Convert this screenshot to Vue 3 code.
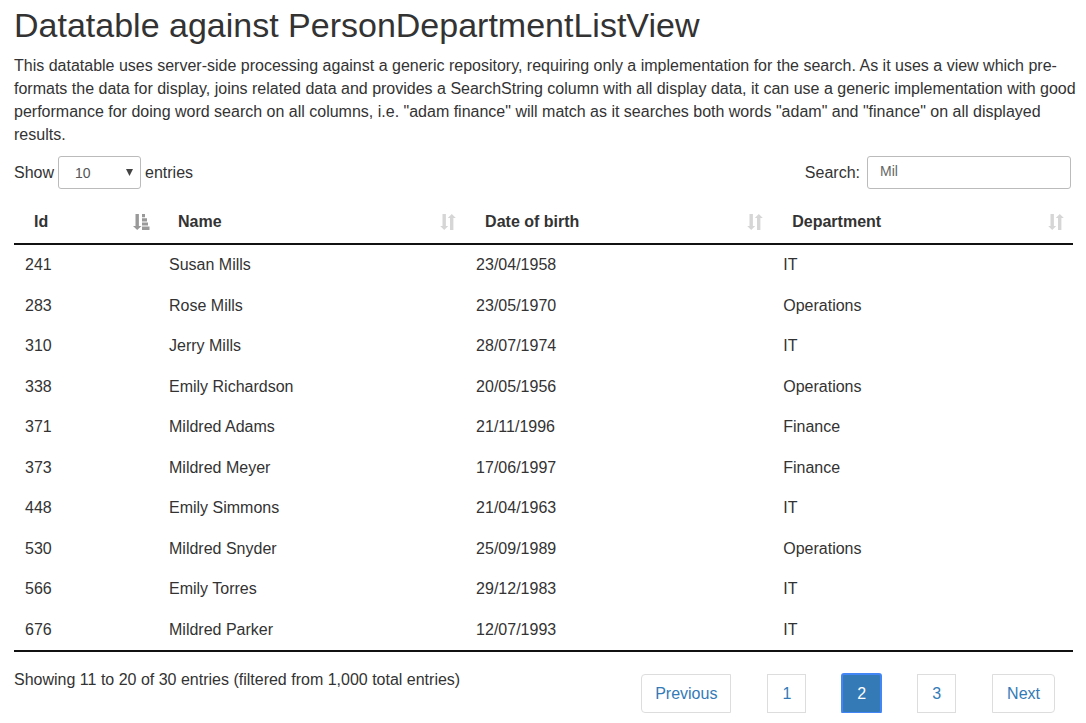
<script setup>
import { ref } from 'vue'

const pageLength = ref('10')
const search = ref('Mil')
const columns = [
  { label: 'Id', sorted: true },
  { label: 'Name' },
  { label: 'Date of birth' },
  { label: 'Department' }
]
const rows = [
  [241, 'Susan Mills', '23/04/1958', 'IT'],
  [283, 'Rose Mills', '23/05/1970', 'Operations'],
  [310, 'Jerry Mills', '28/07/1974', 'IT'],
  [338, 'Emily Richardson', '20/05/1956', 'Operations'],
  [371, 'Mildred Adams', '21/11/1996', 'Finance'],
  [373, 'Mildred Meyer', '17/06/1997', 'Finance'],
  [448, 'Emily Simmons', '21/04/1963', 'IT'],
  [530, 'Mildred Snyder', '25/09/1989', 'Operations'],
  [566, 'Emily Torres', '29/12/1983', 'IT'],
  [676, 'Mildred Parker', '12/07/1993', 'IT']
]
const pages = ['Previous', '1', '2', '3', 'Next']
const current = '2'
</script>

<template>
  <main class="page">
    <h1>Datatable against PersonDepartmentListView</h1>
    <p class="intro">
      This datatable uses server-side processing against a generic repository, requiring only a
      implementation for the search. As it uses a view which pre-formats the data for display, joins
      related data and provides a SearchString column with all display data, it can use a generic
      implementation with good performance for doing word search on all columns, i.e. "adam finance"
      will match as it searches both words "adam" and "finance" on all displayed results.
    </p>

    <div class="toolbar">
      <label class="length">
        Show
        <span class="select-box">
          <select v-model="pageLength">
            <option>10</option>
            <option>25</option>
            <option>50</option>
            <option>100</option>
          </select>
          <svg class="caret" viewBox="0 0 7 7" aria-hidden="true"><path d="M0 0h7L3.5 7z" /></svg>
        </span>
        entries
      </label>
      <label class="search">
        Search:
        <input v-model="search" type="text" />
      </label>
    </div>

    <table>
      <colgroup>
        <col class="col-id" />
        <col class="col-wide" />
        <col class="col-wide" />
        <col />
      </colgroup>
      <thead>
        <tr>
          <th v-for="c in columns" :key="c.label" scope="col">
            <div class="head">
              {{ c.label }}
              <svg v-if="c.sorted" class="sort sorted" viewBox="0 0 17 16" aria-hidden="true">
                <path d="M2.5 0h3.4v12h2.6L4.2 16 0 12h2.5zM9 0h3v3.2H9zM9 4.2h5v3.2H9zM9 8.4h6v3.2H9zM9 12.6h7.5V16H9z" />
              </svg>
              <svg v-else class="sort" viewBox="0 0 17 16" aria-hidden="true">
                <path d="M2.5 0h3.4v12h2.3l-4 4L.2 12h2.3zM10 16h3.4V4h2.4l-4-4-4 4H10z" />
              </svg>
            </div>
          </th>
        </tr>
      </thead>
      <tbody>
        <tr v-for="r in rows" :key="r[0]">
          <td v-for="(v, i) in r" :key="i">{{ v }}</td>
        </tr>
      </tbody>
    </table>

    <footer>
      <div class="info">Showing 11 to 20 of 30 entries (filtered from 1,000 total entries)</div>
      <nav class="pages" aria-label="Pagination">
        <a v-for="p in pages" :key="p" href="#" :class="{ active: p === current }">{{ p }}</a>
      </nav>
    </footer>
  </main>
</template>

<style>
body {
  margin: 0;
  background: #fff;
}
</style>

<style scoped>
.page {
  padding: 4px 13px 0 14px;
  color: #333;
  font: 16px/23px "Liberation Sans", Arial, sans-serif;
}
h1 {
  margin: 0 0 8px;
  font-size: 34px;
  line-height: 42px;
  font-weight: 400;
}
.intro {
  margin: 0 -8px 10px 0;
}
.toolbar {
  display: flex;
  justify-content: space-between;
  padding-right: 2px;
}
.length,
.search {
  display: flex;
  align-items: center;
  gap: 4px;
}
.search {
  gap: 7px;
}
.select-box {
  position: relative;
  display: flex;
}
select,
input {
  box-sizing: border-box;
  height: 33px;
  border: 1px solid #bbb;
  border-radius: 3px;
  background: #fff;
  color: #555;
  font: 14px/20px "Liberation Sans", Arial, sans-serif;
}
select {
  width: 83px;
  padding: 0 16px;
  appearance: none;
}
input {
  width: 204px;
  padding: 0 12px 3px;
  color: #666;
}
.caret {
  position: absolute;
  right: 8px;
  top: 13px;
  width: 7px;
  height: 7px;
  fill: #444;
}
table {
  width: 100%;
  margin-top: 10px;
  border-collapse: separate;
  border-spacing: 0;
  border-bottom: 2px solid #111;
  table-layout: fixed;
}
.col-id {
  width: 144px;
}
.col-wide {
  width: 29%;
}
th {
  padding: 11px 8px 10px 20px;
  border-bottom: 2px solid #111;
  text-align: left;
}
.head {
  display: flex;
  align-items: center;
  justify-content: space-between;
}
.sort {
  width: 17px;
  height: 16px;
  fill: #d6d6d6;
}
.sorted {
  fill: #999;
}
td {
  height: 40px;
  padding: 0 11px 1px;
  box-sizing: border-box;
}
tr:nth-child(even) td {
  height: 41px;
}
footer {
  display: flex;
  justify-content: space-between;
  align-items: flex-start;
  padding: 16px 18px 0 0;
}
.pages {
  display: flex;
  gap: 36px;
  margin-top: 6px;
}
.pages a {
  padding: 7px 14px;
  border: 1px solid #ddd;
  color: #337ab7;
  text-decoration: none;
}
.pages a:first-child {
  padding: 7px 13px;
  border-radius: 4px 0 0 4px;
}
.pages a:last-child {
  border-radius: 0 4px 4px 0;
}
.pages a.active {
  border-color: #4285f4;
  border-radius: 2px;
  background: #337ab7;
  box-shadow: 0 0 0 1px #4285f4;
  color: #fff;
}
</style>
